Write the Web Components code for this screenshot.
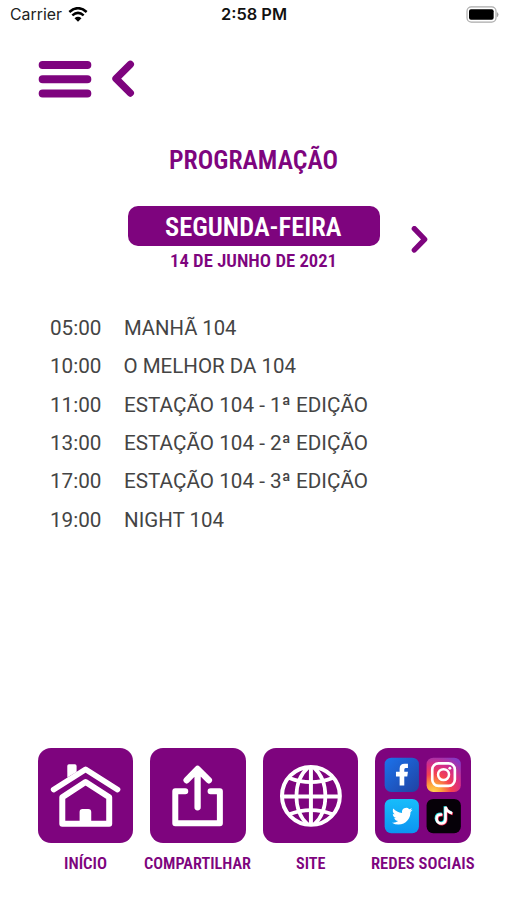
<!DOCTYPE html>
<html lang="pt-BR">
<head>
<meta charset="utf-8">
<title>Programação</title>
<style>
html,body{margin:0;background:#fff}
body{font-family:Roboto,"Liberation Sans",sans-serif;color:#444}
</style>
</head>
<body>
<radio-app></radio-app>
<script>
const define = (name, html, setup) => customElements.define(name, class extends HTMLElement {
  connectedCallback() {
    if (this.shadowRoot) return;
    const root = this.attachShadow({ mode: 'open' });
    const t = document.createElement('template');
    t.innerHTML = typeof html === 'function' ? html(this) : html;
    root.append(t.content.cloneNode(true));
    if (setup) setup(this, root);
  }
});

/* A single line of text condensed or widened to a given width. */
define('fit-text', el => `<style>
:host{display:block;width:${el.getAttribute('width')}px;flex:none;white-space:nowrap}
span{display:inline-block;transform-origin:0 50%}
</style><span><slot></slot></span>`, (el, root) => {
  const span = root.querySelector('span');
  const w = span.getBoundingClientRect().width;
  if (w) span.style.transform = `scaleX(${el.getAttribute('width') / w})`;
});

define('status-bar', `<style>
:host{display:grid;grid-template-columns:1fr auto 1fr;align-items:center;height:29px;padding:0 8px 0 9.500px;box-sizing:border-box;color:#222;font:400 15.500px/29px Inter,sans-serif}
.l{display:flex;align-items:center;gap:6px}
.c{font-weight:600;color:#111}
.r{display:flex;justify-content:flex-end}
svg{display:block}
.r svg{margin:-1px -1px 0 0}
</style>
<div class="l"><fit-text width="52">Carrier</fit-text>
<svg width="20" height="15" viewBox="205 20 60 45"><path d="M209 35Q235 12 261 35" fill="none" stroke="#000" stroke-width="7.5"/><path d="M218 45Q235 30 252 45" fill="none" stroke="#000" stroke-width="7.5"/><path d="M224.500 53.500Q235 45 245.500 53.500L235 64.500Z" fill="#000"/></svg></div>
<fit-text class="c" width="66">2:58 PM</fit-text>
<div class="r"><svg width="34" height="17" viewBox="638 16 102 51"><rect x="641" y="18.500" width="87" height="46" rx="13" fill="#fff" stroke="#aaa" stroke-width="3.500"/><rect x="647" y="26" width="74" height="31" rx="6" fill="#000"/><path d="M732 36q5 5 0 12z" fill="#999" stroke="#999" stroke-width="2"/></svg></div>`);

define('nav-bar', `<style>
:host{display:flex;align-items:flex-start;gap:19px;padding:31px 0 0 38px;height:39px}
svg{display:block}
</style>
<svg width="54" height="39" viewBox="114 180 162 117"><path d="M128 195H262M128 238H262M128 280.500H262" stroke="#7e047e" stroke-width="24" stroke-linecap="round"/></svg>
<svg width="24" height="39" viewBox="333 180 72 117"><path d="M391 193L348 236L391 279" fill="none" stroke="#7e047e" stroke-width="22" stroke-linecap="round" stroke-linejoin="round"/></svg>`);

define('day-picker', `<style>
:host{display:grid;grid-template-columns:128px 251.500px 1fr;color:#7e047e;font-weight:600;font-stretch:75%;justify-items:center}
.title{grid-column:2;font-size:25.500px;line-height:30px;margin:46.300px 1px 0 0}
.day{grid-column:2;grid-row:2;margin-top:30.700px;width:100%;height:40px;box-sizing:border-box;padding:1px 1px 0 0;border-radius:10px;background:#7e047e;color:#fff;font-size:26px;line-height:40px;display:flex;justify-content:center}
.date{grid-column:2;font-size:18px;line-height:22px;margin-top:4.500px}
svg{grid-column:3;grid-row:2;justify-self:start;margin:50.500px 0 -10px 31px}
</style>
<fit-text class="title" width="169"><slot name="title"></slot></fit-text>
<div class="day"><fit-text width="176.5"><slot name="day"></slot></fit-text></div>
<fit-text class="date" width="167"><slot name="date"></slot></fit-text>
<svg width="18" height="27" viewBox="902 272 54 81"><path d="M912 280L943 312L912 344" fill="none" stroke="#7e047e" stroke-width="16" stroke-linecap="round" stroke-linejoin="round"/></svg>`);

define('program-row', el => `<style>
:host{display:flex;gap:22px;font-size:20.500px;line-height:38.450px;height:38.450px;color:#444}
</style><fit-text width="51.500">${el.getAttribute('time')}</fit-text><fit-text width="${el.getAttribute('fit')}"><slot></slot></fit-text>`);

define('tab-tile', el => `<style>
:host{display:flex;flex-direction:column;align-items:center;width:112.600px;color:#7e047e}
.tile{width:95.500px;height:95.500px;border-radius:13px;background:#7e047e;overflow:hidden}
::slotted(svg){display:block;width:95.500px;height:95.500px}
fit-text{font-size:16px;font-weight:600;font-stretch:75%;line-height:20px;margin-top:11px}
</style><div class="tile"><slot></slot></div><fit-text width="${el.getAttribute('fit')}">${el.getAttribute('label')}</fit-text>`);

define('radio-app', `<style>
:host{display:flex;flex-direction:column;width:507px;height:900px;overflow:hidden;background:#fff}
main{flex:1;padding:36.200px 0 0 50px}
nav{display:flex;height:152.300px;padding-left:29.100px}
</style>
<status-bar></status-bar>
<nav-bar></nav-bar>
<day-picker><span slot="title">PROGRAMAÇÃO</span><span slot="day">SEGUNDA-FEIRA</span><span slot="date">14 DE JUNHO DE 2021</span></day-picker>
<main>
<program-row time="05:00" fit="112.500">MANHÃ 104</program-row>
<program-row time="10:00" fit="172.500">O MELHOR DA 104</program-row>
<program-row time="11:00" fit="244">ESTAÇÃO 104 - 1ª EDIÇÃO</program-row>
<program-row time="13:00" fit="244">ESTAÇÃO 104 - 2ª EDIÇÃO</program-row>
<program-row time="17:00" fit="244">ESTAÇÃO 104 - 3ª EDIÇÃO</program-row>
<program-row time="19:00" fit="100">NIGHT 104</program-row>
</main>
<nav>
<tab-tile label="INÍCIO" fit="43">
<svg viewBox="22 23 287 287" fill="none" stroke="#fff" stroke-linecap="round" stroke-linejoin="round"><path d="M69 148L165 87L261 148" stroke-width="17"/><path d="M110 112V77Q110 72 115 72H133Q138 72 138 77V95Z" fill="#fff" stroke="none"/><path d="M95 171L165 125L236 171V251H95Z" stroke-width="18"/><path d="M147 251V215Q147 206 156 206H173Q182 206 182 215V251Z" fill="#fff" stroke="none"/></svg></tab-tile>
<tab-tile label="COMPARTILHAR" fit="107">
<svg viewBox="30 23 287 287" fill="none" stroke="#fff" stroke-width="19" stroke-linecap="round" stroke-linejoin="round"><path d="M173 201V88M140 120L173 86L207 120"/><path d="M136 153H106V249H240V153H212" stroke-width="18"/></svg></tab-tile>
<tab-tile label="SITE" fit="29.500">
<svg viewBox="23 23 287 287" fill="none" stroke="#fff" stroke-width="11"><circle cx="167" cy="167" r="87" stroke-width="12"/><path d="M80 169H254M167 80V254" stroke-width="12"/><path d="M158 82C112 123 112 213 158 253M176 82C222 123 222 213 176 253"/><path d="M102 113Q167 138 232 113M102 222Q167 197 232 222"/></svg></tab-tile>
<tab-tile label="REDES SOCIAIS" fit="103.500">
<svg viewBox="31 23 287 287">
<defs><linearGradient id="f" x1="0" y1="0" x2="1" y2="1"><stop stop-color="#1b73ec"/><stop offset="1" stop-color="#2042a2"/></linearGradient>
<linearGradient id="t" x1="0" y1="0" x2="0" y2="1"><stop stop-color="#17bdfb"/><stop offset="1" stop-color="#0c94f1"/></linearGradient>
<radialGradient id="i" cx=".2" cy="1" r="1.150"><stop stop-color="#ffd34e"/><stop offset=".2" stop-color="#fda43c"/><stop offset=".45" stop-color="#f5434f"/><stop offset=".7" stop-color="#d62c86"/><stop offset="1" stop-color="#8639c4"/></radialGradient></defs>
<rect x="60" y="52" width="103" height="103" rx="20" fill="url(#f)"/>
<path d="M105 136V109H94V94H105V85Q105 70 120 70H130V83H123Q119 83 119 88V94H130L128 109H119V136Z" fill="#fff"/>
<rect x="186" y="52" width="103" height="103" rx="20" fill="url(#i)"/>
<rect x="203" y="69" width="68" height="68" rx="19" fill="none" stroke="#fff" stroke-width="8"/><circle cx="237" cy="103" r="16.500" fill="none" stroke="#fff" stroke-width="7.500"/><circle cx="256" cy="84" r="4.500" fill="#fff"/>
<rect x="60" y="176" width="103" height="103" rx="20" fill="url(#t)"/>
<path transform="translate(82 197) scale(2.580)" fill="#fff" d="M23.950 4.570a10 10 0 0 1-2.820.770 4.960 4.960 0 0 0 2.160-2.720c-.950.550-2 .950-3.130 1.190a4.920 4.920 0 0 0-8.380 4.480C7.690 8.090 4.070 6.130 1.640 3.160a4.820 4.820 0 0 0-.670 2.470c0 1.710.870 3.210 2.190 4.100a4.900 4.900 0 0 1-2.230-.620v.060a4.920 4.920 0 0 0 3.950 4.830 5 5 0 0 1-2.210.080 4.940 4.940 0 0 0 4.600 3.420A9.870 9.870 0 0 1 0 19.540a14 14 0 0 0 7.550 2.210c9.050 0 14-7.500 14-13.990 0-.210 0-.420-.020-.630a9.940 9.940 0 0 0 2.460-2.550z"/>
<rect x="186" y="176" width="103" height="103" rx="20" fill="#060108"/>
<g fill="none" stroke-width="8"><path d="M233 223Q216 221 216 236Q218 250 231 250Q243 248 243 236V200Q247 215 263 219" stroke="#25dce2" transform="translate(-2 -2)"/><path d="M233 223Q216 221 216 236Q218 250 231 250Q243 248 243 236V200Q247 215 263 219" stroke="#f42b55" transform="translate(2 2)"/><path d="M233 223Q216 221 216 236Q218 250 231 250Q243 248 243 236V200Q247 215 263 219" stroke="#fff"/></g>
</svg></tab-tile>
</nav>`);
</script>
</body>
</html>
